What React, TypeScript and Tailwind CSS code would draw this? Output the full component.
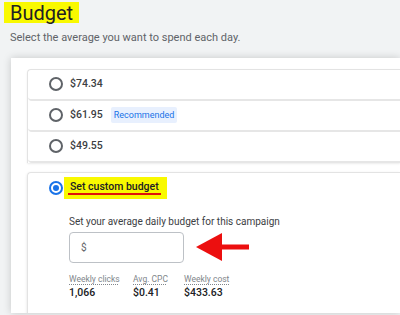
import { Fragment } from 'react';

type Option = {
  amount: string;
  recommended?: boolean;
};

const options: Option[] = [
  { amount: '$74.34' },
  { amount: '$61.95', recommended: true },
  { amount: '$49.55' },
];

const stats = [
  { label: 'Weekly clicks', value: '1,066', width: 'w-[64px]' },
  { label: 'Avg. CPC', value: '$0.41', width: 'w-[51px]' },
  { label: 'Weekly cost', value: '$433.63', width: 'w-[60px]' },
];

const Radio = ({ checked = false }: { checked?: boolean }) => (
  <span
    className={`flex h-[14px] w-[14px] shrink-0 items-center justify-center rounded-full border-2 ${
      checked ? 'border-[#1a73e8]' : 'border-[#5f6368]'
    }`}
  >
    {checked && <span className="h-[6px] w-[6px] rounded-full bg-[#1a73e8]" />}
  </span>
);

const App = () => {
  return (
    <main className="h-[315px] w-[400px] overflow-hidden bg-[#f1f3f4] font-['Roboto','Liberation_Sans',sans-serif] text-[#3c4043]">
      {/* Header */}
      <div className="pl-[4px] pt-[2px]">
        <h1 className="inline-flex h-[21px] items-center bg-[#f9f900] px-[6px] text-[20px] leading-none text-[#202124]">
          Budget
        </h1>
      </div>
      <p className="mt-[4px] pl-[10px] text-[11px] leading-[14px] text-[#5f6368]">
        Select the average you want to spend each day.
      </p>

      {/* Outer card */}
      <div className="ml-[11px] mt-[13px] h-[255px] overflow-hidden bg-white pl-[16px] pt-[11px] shadow-[0_0_8px_rgba(0,0,0,0.18)]">
        {/* Preset options */}
        <div className="rounded-tl-[4px] border-l border-t border-[#e3e3e3] shadow-[0_1px_2px_rgba(0,0,0,0.08)]">
          {options.map((option) => (
            <Fragment key={option.amount}>
              <label className="flex h-[31px] items-center gap-[7px] rounded-l-[4px] border-b-2 border-[#e6e6e6] pl-[21px]">
                <Radio />
                <span className="text-[10.5px] font-medium">{option.amount}</span>
                {option.recommended && (
                  <span className="ml-[1px] rounded-[2px] bg-[#e8f0fe] px-[3px] py-[3px] text-[9px] leading-[10px] text-[#1a73e8]">
                    Recommended
                  </span>
                )}
              </label>
            </Fragment>
          ))}
        </div>

        {/* Custom budget */}
        <div className="mt-[9px] h-[200px] rounded-tl-[4px] border-l border-t border-[#e3e3e3] pl-[21px] pt-[4px] shadow-[0_1px_3px_rgba(0,0,0,0.12)]">
          <div className="flex h-[22px] items-center">
            <Radio checked />
            <span className="ml-[1px] flex h-[22px] items-center whitespace-nowrap bg-[#f9f900] pl-[4px] pr-[6px]">
              <span className="border-b-2 border-[#e0100c] px-[2px] text-[10.5px] font-medium leading-[12px] text-[#202124]">
                Set custom budget
              </span>
            </span>
          </div>

          <div className="pl-[20px]">
            <p className="mt-[16px] text-[10px] leading-[14px]">
              Set your average daily budget for this campaign
            </p>

            <div className="mt-[3px] flex items-center gap-[12px]">
              <div className="flex h-[31px] w-[115px] items-center rounded-[4px] border border-[#bdc1c6] pl-[11px] text-[10px] text-[#5f6368]">
                $
              </div>
              <svg
                width="54"
                height="30"
                viewBox="0 0 54 30"
                className="shrink-0"
              >
                <polygon points="0,15 26,1 26,29" fill="#ec0f0f" />
                <rect x="25" y="12.5" width="28" height="5" fill="#ec0f0f" />
              </svg>
            </div>

            <div className="mt-[11px] flex">
              {stats.map((stat) => (
                <div key={stat.label} className={stat.width}>
                  <div className="text-[8.5px] leading-[11px] text-[#80868b] underline decoration-dotted underline-offset-2">
                    {stat.label}
                  </div>
                  <div className="mt-[1px] text-[10.5px] font-medium leading-[13px] text-[#202124]">
                    {stat.value}
                  </div>
                </div>
              ))}
            </div>
          </div>
        </div>
      </div>
    </main>
  );
};

export default App;
